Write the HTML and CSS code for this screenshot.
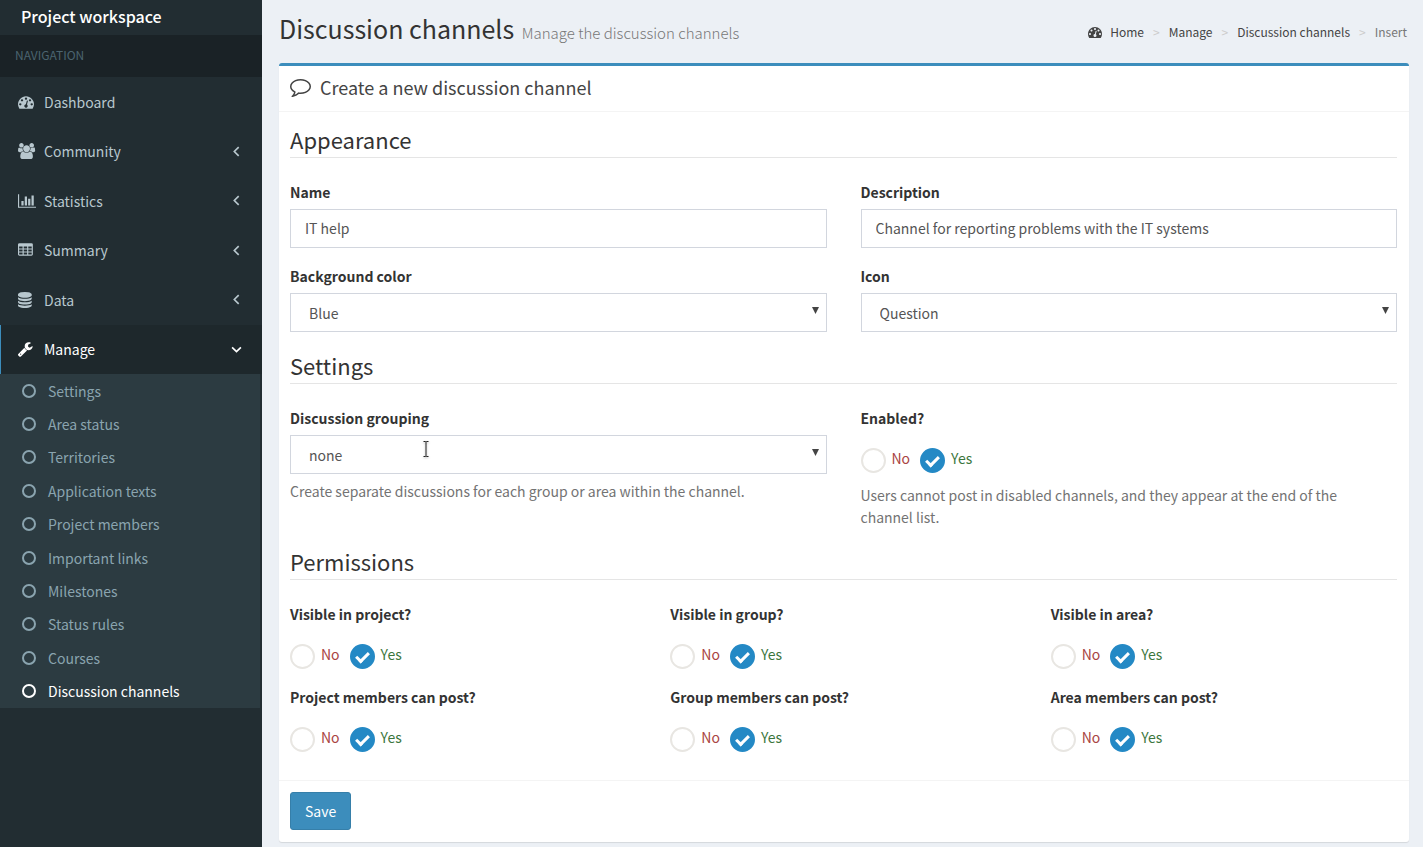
FILE: index.html
```html
<!DOCTYPE html>
<html lang="en">
<head>
<meta charset="utf-8">
<title>Discussion channels</title>
<link rel="stylesheet" href="styles.css">
</head>
<body>
<svg class="sprite" aria-hidden="true">
  <symbol id="gauge" viewBox="0 0 1792 1792" preserveAspectRatio="xMinYMid"><path d="M384 1152q0-53-37.500-90.500t-90.500-37.500-90.500 37.500-37.500 90.500 37.500 90.500 90.500 37.500 90.500-37.500 37.500-90.500zm192-448q0-53-37.500-90.500t-90.500-37.500-90.500 37.500-37.500 90.500 37.500 90.500 90.500 37.500 90.500-37.500 37.500-90.500zm428 481l101-382q6-26-7.500-48.500t-38.500-29.500-48 6.500-30 39.500l-101 382q-60 5-107 43.500t-63 98.500q-20 77 20 146t117 89 146-20 89-117q16-60-6-117t-72-91zm660-33q0-53-37.500-90.500t-90.500-37.500-90.500 37.500-37.500 90.500 37.500 90.500 90.500 37.500 90.500-37.500 37.500-90.500zm-640-640q0-53-37.500-90.500t-90.500-37.500-90.500 37.500-37.500 90.500 37.500 90.500 90.500 37.500 90.500-37.500 37.500-90.500zm448 192q0-53-37.500-90.500t-90.500-37.500-90.500 37.500-37.500 90.500 37.500 90.500 90.500 37.500 90.500-37.500 37.500-90.500zm320 448q0 261-141 483-19 29-54 29h-1402q-35 0-54-29-141-221-141-483 0-182 71-348t191-286 286-191 348-71 348 71 286 191 191 286 71 348z"/></symbol>
  <symbol id="users" viewBox="0 0 1920 1792" preserveAspectRatio="xMinYMid"><path d="M593 896q-162 5-265 128h-134q-82 0-138-40.500t-56-118.500q0-353 124-353 6 0 43.500 21t97.500 42.500 119 21.500q67 0 133-23-5 37-5 66 0 159 81 286zm1071 637q0 120-73 189.500t-194 69.500h-874q-121 0-194-69.500t-73-189.500q0-53 3.500-103.500t14-109 26.500-108.500 43-97.500 62-81 85.500-53.500 111.500-20q10 0 43 21.500t73 48 107 48 135 21.500 135-21.500 107-48 73-48 43-21.500q61 0 111.500 20t85.500 53.500 62 81 43 97.500 26.500 108.500 14 109 3.500 103.500zm-1024-1277q0 106-75 181t-181 75-181-75-75-181 75-181 181-75 181 75 75 181zm704 384q0 159-112.500 271.500t-271.500 112.500-271.500-112.500-112.500-271.500 112.500-271.500 271.500-112.500 271.500 112.500 112.500 271.500zm576 225q0 78-56 118.500t-138 40.500h-134q-103-123-265-128 81-127 81-286 0-29-5-66 66 23 133 23 59 0 119-21.500t97.500-42.500 43.500-21q124 0 124 353zm-128-609q0 106-75 181t-181 75-181-75-75-181 75-181 181-75 181 75 75 181z"/></symbol>
  <symbol id="bars" viewBox="0 0 2048 1792" preserveAspectRatio="xMinYMid"><path d="M640 896v512h-256v-512h256zm384-512v1024h-256v-1024h256zm1024 1152v128h-2048v-1536h128v1408h1920zm-640-896v768h-256v-768h256zm384-384v1152h-256v-1152h256z"/></symbol>
  <symbol id="table" viewBox="0 0 1664 1792" preserveAspectRatio="xMinYMid"><path fill-rule="evenodd" d="M160 128h1344q66 0 113 47t47 113v1088q0 66-47 113t-113 47h-1344q-66 0-113-47t-47-113v-1088q0-66 47-113t113-47zM128 512v224h384v-224zM640 512v224h384v-224zM1152 512v224h384v-224zM128 832v224h384v-224zM640 832v224h384v-224zM1152 832v224h384v-224zM128 1184v192q0 32 32 32h352v-224zM640 1184v224h384v-224zM1152 1184v224h352q32 0 32-32v-192z"/></symbol>
  <symbol id="database" viewBox="128 0 1536 1792" preserveAspectRatio="xMinYMid"><path d="M896 768q237 0 443-43t325-127v170q0 69-103 128t-280 93.500-385 34.500-385-34.500-280-93.500-103-128v-170q119 84 325 127t443 43zm0 768q237 0 443-43t325-127v170q0 69-103 128t-280 93.500-385 34.500-385-34.500-280-93.500-103-128v-170q119 84 325 127t443 43zm0-384q237 0 443-43t325-127v170q0 69-103 128t-280 93.500-385 34.500-385-34.500-280-93.500-103-128v-170q119 84 325 127t443 43zm0-1152q208 0 385 34.500t280 93.500 103 128v128q0 69-103 128t-280 93.500-385 34.500-385-34.500-280-93.500-103-128v-128q0-69 103-128t280-93.500 385-34.500z"/></symbol>
  <symbol id="wrench" viewBox="85 0 1664 1792" preserveAspectRatio="xMinYMid"><path d="M448 1472q0-26-19-45t-45-19-45 19-19 45 19 45 45 19 45-19 19-45zm644-420l-682 682q-37 37-90 37-52 0-91-37l-106-108q-38-36-38-90 0-53 38-91l681-681q39 98 114.500 173.500t173.500 114.500zm634-435q0 39-23 106-47 134-164.500 217.500t-258.500 83.500q-185 0-316.500-131.500t-131.500-316.500 131.500-316.500 316.500-131.500q58 0 121.500 16.500t107.500 46.500q16 11 16 28t-16 28l-293 169v224l193 107q5-3 79-48.500t135.500-81 70.500-35.500q15 0 23.500 10t8.500 25z"/></symbol>
  <symbol id="comment" viewBox="0 0 1792 1792"><path d="M896 384q-204 0-381.500 69.500t-282 187.500-104.500 255q0 112 71.500 213.500t201.500 175.500l87 50-27 96q-24 91-70 172 152-63 275-171l43-38 57 6q69 8 130 8 204 0 381.500-69.500t282-187.500 104.500-255-104.500-255-282-187.500-381.500-69.500zm896 512q0 174-120 321.500t-326 233-450 85.500q-70 0-145-8-198 175-460 242-49 14-114 22h-5q-15 0-27-10.500t-16-27.500v-1q-3-4-.5-12t2-10 4.500-9.500l6-9 7-8.500 8-9q7-8 31-34.500t34.500-38 31-39.500 32.500-51 27-59 26-76q-157-89-247.500-220t-90.500-281q0-174 120-321.500t326-233 450-85.500 450 85.500 326 233 120 321.500z"/></symbol>
  <symbol id="left" viewBox="0 0 10 10"><path d="M7 1L3 5l4 4" fill="none" stroke="currentColor" stroke-width="1.500"/></symbol>
  <symbol id="down" viewBox="0 0 10 10"><path d="M1 3l4 4 4-4" fill="none" stroke="currentColor" stroke-width="1.500"/></symbol>
  <symbol id="ring" viewBox="0 0 14 14"><circle cx="7" cy="7" r="6" fill="none" stroke="currentColor" stroke-width="2"/></symbol>
  <symbol id="caret" viewBox="0 0 8 8"><path d="M1 1h7L4.500 8z"/></symbol>
</svg>
<div class="layout">
  <aside class="sidebar">
    <div class="brand">Project workspace</div>
    <div class="nav-header">NAVIGATION</div>
    <nav>
      <ul class="menu">
        <li><a href="#"><svg class="icon"><use href="#gauge"/></svg><span>Dashboard</span></a></li>
        <li><a href="#"><svg class="icon"><use href="#users"/></svg><span>Community</span><svg class="angle"><use href="#left"/></svg></a></li>
        <li><a href="#"><svg class="icon"><use href="#bars"/></svg><span>Statistics</span><svg class="angle"><use href="#left"/></svg></a></li>
        <li><a href="#"><svg class="icon"><use href="#table"/></svg><span>Summary</span><svg class="angle"><use href="#left"/></svg></a></li>
        <li><a href="#"><svg class="icon"><use href="#database"/></svg><span>Data</span><svg class="angle"><use href="#left"/></svg></a></li>
        <li class="active"><a href="#"><svg class="icon"><use href="#wrench"/></svg><span>Manage</span><svg class="angle"><use href="#down"/></svg></a></li>
      </ul>
      <ul class="submenu">
        <li><a href="#"><svg class="ring"><use href="#ring"/></svg>Settings</a></li>
        <li><a href="#"><svg class="ring"><use href="#ring"/></svg>Area status</a></li>
        <li><a href="#"><svg class="ring"><use href="#ring"/></svg>Territories</a></li>
        <li><a href="#"><svg class="ring"><use href="#ring"/></svg>Application texts</a></li>
        <li><a href="#"><svg class="ring"><use href="#ring"/></svg>Project members</a></li>
        <li><a href="#"><svg class="ring"><use href="#ring"/></svg>Important links</a></li>
        <li><a href="#"><svg class="ring"><use href="#ring"/></svg>Milestones</a></li>
        <li><a href="#"><svg class="ring"><use href="#ring"/></svg>Status rules</a></li>
        <li><a href="#"><svg class="ring"><use href="#ring"/></svg>Courses</a></li>
        <li class="current"><a href="#"><svg class="ring"><use href="#ring"/></svg>Discussion channels</a></li>
      </ul>
    </nav>
  </aside>
  <main class="content">
    <header class="page-header">
      <h1>Discussion channels <small>Manage the discussion channels</small></h1>
      <ol class="breadcrumb">
        <li><a href="#"><svg class="crumb-icon"><use href="#gauge"/></svg>Home</a></li>
        <li><a href="#">Manage</a></li>
        <li><a href="#">Discussion channels</a></li>
        <li>Insert</li>
      </ol>
    </header>
    <form class="box">
      <div class="box-header"><svg class="box-icon"><use href="#comment"/></svg><h2>Create a new discussion channel</h2></div>
      <div class="box-body">
        <section>
          <h3>Appearance</h3>
          <div class="grid two">
            <div class="field"><label for="name">Name</label><input class="control" id="name" type="text" value="IT help"></div>
            <div class="field"><label for="description">Description</label><input class="control" id="description" type="text" value="Channel for reporting problems with the IT systems"></div>
            <div class="field"><label for="color">Background color</label><div class="select"><select class="control" id="color"><option>Blue</option></select><svg class="caret"><use href="#caret"/></svg></div></div>
            <div class="field"><label for="icon">Icon</label><div class="select"><select class="control" id="icon"><option>Question</option></select><svg class="caret"><use href="#caret"/></svg></div></div>
          </div>
        </section>
        <section>
          <h3>Settings</h3>
          <div class="grid two">
            <div class="field"><label for="grouping">Discussion grouping</label><div class="select"><select class="control" id="grouping"><option>none</option></select><svg class="caret"><use href="#caret"/></svg>
              <svg class="pointer" viewBox="0 0 8 18" aria-hidden="true"><path d="M1.500 1.500h2l.5.5.5-.5h2M4 2v14M1.500 16.500h2l.5-.5.5.5h2"/></svg></div>
              <p class="help">Create separate discussions for each group or area within the channel.</p></div>
            <fieldset class="field"><legend>Enabled?</legend><div class="choices"><label class="no"><input type="radio" name="enabled">No</label><label class="yes"><input type="radio" name="enabled" checked>Yes</label></div>
              <p class="help">Users cannot post in disabled channels, and they appear at the end of the channel list.</p></fieldset>
          </div>
        </section>
        <section>
          <h3>Permissions</h3>
          <div class="grid three">
            <fieldset class="field"><legend>Visible in project?</legend><div class="choices"><label class="no"><input type="radio" name="vp">No</label><label class="yes"><input type="radio" name="vp" checked>Yes</label></div></fieldset>
            <fieldset class="field"><legend>Visible in group?</legend><div class="choices"><label class="no"><input type="radio" name="vg">No</label><label class="yes"><input type="radio" name="vg" checked>Yes</label></div></fieldset>
            <fieldset class="field"><legend>Visible in area?</legend><div class="choices"><label class="no"><input type="radio" name="va">No</label><label class="yes"><input type="radio" name="va" checked>Yes</label></div></fieldset>
            <fieldset class="field"><legend>Project members can post?</legend><div class="choices"><label class="no"><input type="radio" name="pp">No</label><label class="yes"><input type="radio" name="pp" checked>Yes</label></div></fieldset>
            <fieldset class="field"><legend>Group members can post?</legend><div class="choices"><label class="no"><input type="radio" name="pg">No</label><label class="yes"><input type="radio" name="pg" checked>Yes</label></div></fieldset>
            <fieldset class="field"><legend>Area members can post?</legend><div class="choices"><label class="no"><input type="radio" name="pa">No</label><label class="yes"><input type="radio" name="pa" checked>Yes</label></div></fieldset>
          </div>
        </section>
      </div>
      <div class="box-footer"><button class="save" type="submit">Save</button></div>
    </form>
  </main>
</div>
</body>
</html>
```
FILE: styles.css
```css
* { box-sizing: border-box; }
body {
  margin: 0;
  background: #ecf0f5;
  color: #333;
  font: 14px/22px "Noto Sans CJK SC", "Open Sans", sans-serif;
}
ul, ol { list-style: none; margin: 0; padding: 0; }
h1, h2, h3, p { margin: 0; font-weight: 400; }
a { color: inherit; text-decoration: none; }
svg { fill: currentColor; flex: none; }
.sprite { display: none; }
.layout { display: flex; min-height: 100vh; }

.sidebar { flex: none; width: 262px; background: #222d32; color: #b8c7ce; }
.brand { height: 35px; padding: 5px 21px; color: #fff; font-size: 16px; font-weight: 500; }
.nav-header { height: 42px; padding: 9px 15px; background: #1a2226; color: #4b646f; font-size: 12px; }
.menu { display: grid; grid-auto-rows: 1fr; height: 297px; }
.menu a { display: flex; align-items: center; height: 100%; padding: 0 20px 0 15px; border-left: 3px solid transparent; }
.menu span { flex: 1; }
.menu .active a { padding-left: 17px; border-left: 1px solid #3c8dbc; background: #1e282c; color: #fff; }
.icon { width: 18px; height: 16px; margin-right: 8px; }
.angle { width: 11px; height: 11px; }
.submenu { display: grid; grid-auto-rows: 1fr; width: 260px; height: 334px; background: #2c3b41; color: #8aa4af; }
.submenu a { display: flex; align-items: center; height: 100%; padding-left: 22px; }
.submenu .current { color: #fff; }
.ring { width: 14px; height: 14px; margin-right: 12px; }

.content { flex: 1; min-width: 0; padding: 0 14px 5px 17px; }
.page-header { display: flex; justify-content: space-between; align-items: center; height: 63px; padding-right: 2px; }
h1 { padding-bottom: 2px; font-size: 25px; line-height: 32px; }
h1 small { margin-left: 2px; color: #777; font-size: 15px; font-weight: 300; }
.breadcrumb { display: flex; font-size: 12px; color: #777; }
.breadcrumb a { color: #444; }
.breadcrumb li + li::before { content: ">"; padding: 0 9px; color: #ccc; }
.crumb-icon { width: 14px; height: 14px; margin-right: 8px; vertical-align: -2px; }

.box { border-top: 3px solid #3c8dbc; border-radius: 3px; background: #fff; box-shadow: 0 1px 1px rgba(0, 0, 0, .1); }
.box-header { display: flex; align-items: center; gap: 9px; height: 46px; padding: 0 11px 4px; border-bottom: 1px solid #f4f4f4; color: #444; }
.box-icon { width: 21px; height: 21px; }
h2 { font-size: 18px; }
.box-body { display: flex; flex-direction: column; gap: 20px; padding: 14px 12px 28px 11px; }
h3 { height: 32px; margin-bottom: 24px; border-bottom: 1px solid #e5e5e5; font-size: 22px; line-height: 26px; }
.grid { display: grid; column-gap: 34px; row-gap: 18px; }
.two { grid-template-columns: 1fr 1fr; }
.three { grid-template-columns: 1fr 1fr 1fr; }
.field { min-width: 0; margin: 0; padding: 0; border: 0; }
.field > label, legend { display: block; padding: 0 0 2px; font-weight: 700; line-height: 20px; }
.control {
  display: block;
  width: 100%;
  height: 39px;
  margin-top: 5px;
  padding: 0 14px 2px;
  border: 1px solid #d2d6de;
  border-radius: 0;
  background: #fff;
  color: #555;
  font: inherit;
  appearance: none;
}
.select { position: relative; }
.select .control { padding: 0 18px; }
.caret { position: absolute; top: 13px; right: 8px; width: 8px; height: 8px; color: #444; }
.pointer { position: absolute; top: 5px; left: 132px; width: 8px; height: 18px; fill: none; stroke: #222; stroke-width: 1; filter: drop-shadow(0 1px 1px rgba(0, 0, 0, .3)); }
.help { margin-top: 6px; padding-right: 20px; color: #737373; }
.choices { display: flex; gap: 10px; padding-top: 18px; line-height: 20px; }
.choices + .help { margin-top: 11px; }
.choices label { display: flex; align-items: flex-start; gap: 6px; }
.no { color: #a94442; }
.yes { color: #3c763d; }
.choices input {
  display: grid;
  place-items: center;
  width: 25px;
  height: 25px;
  margin: 0;
  border: 2px solid #e8e6e2;
  border-radius: 50%;
  appearance: none;
}
.choices input:checked { border-color: #2489c5; background: #2489c5; }
.choices input:checked::before {
  content: "";
  box-sizing: border-box;
  width: 13px;
  height: 8px;
  border: solid #fff;
  border-width: 0 0 3px 3px;
  transform: translateY(-1px) rotate(-45deg);
}
.box-footer { padding: 11px 11px 12px; border-top: 1px solid #f4f4f4; }
.save { display: block; height: 38px; padding: 0 14px; border: 1px solid #367fa9; border-radius: 3px; background: #3c8dbc; color: #fff; font: inherit; }
```
